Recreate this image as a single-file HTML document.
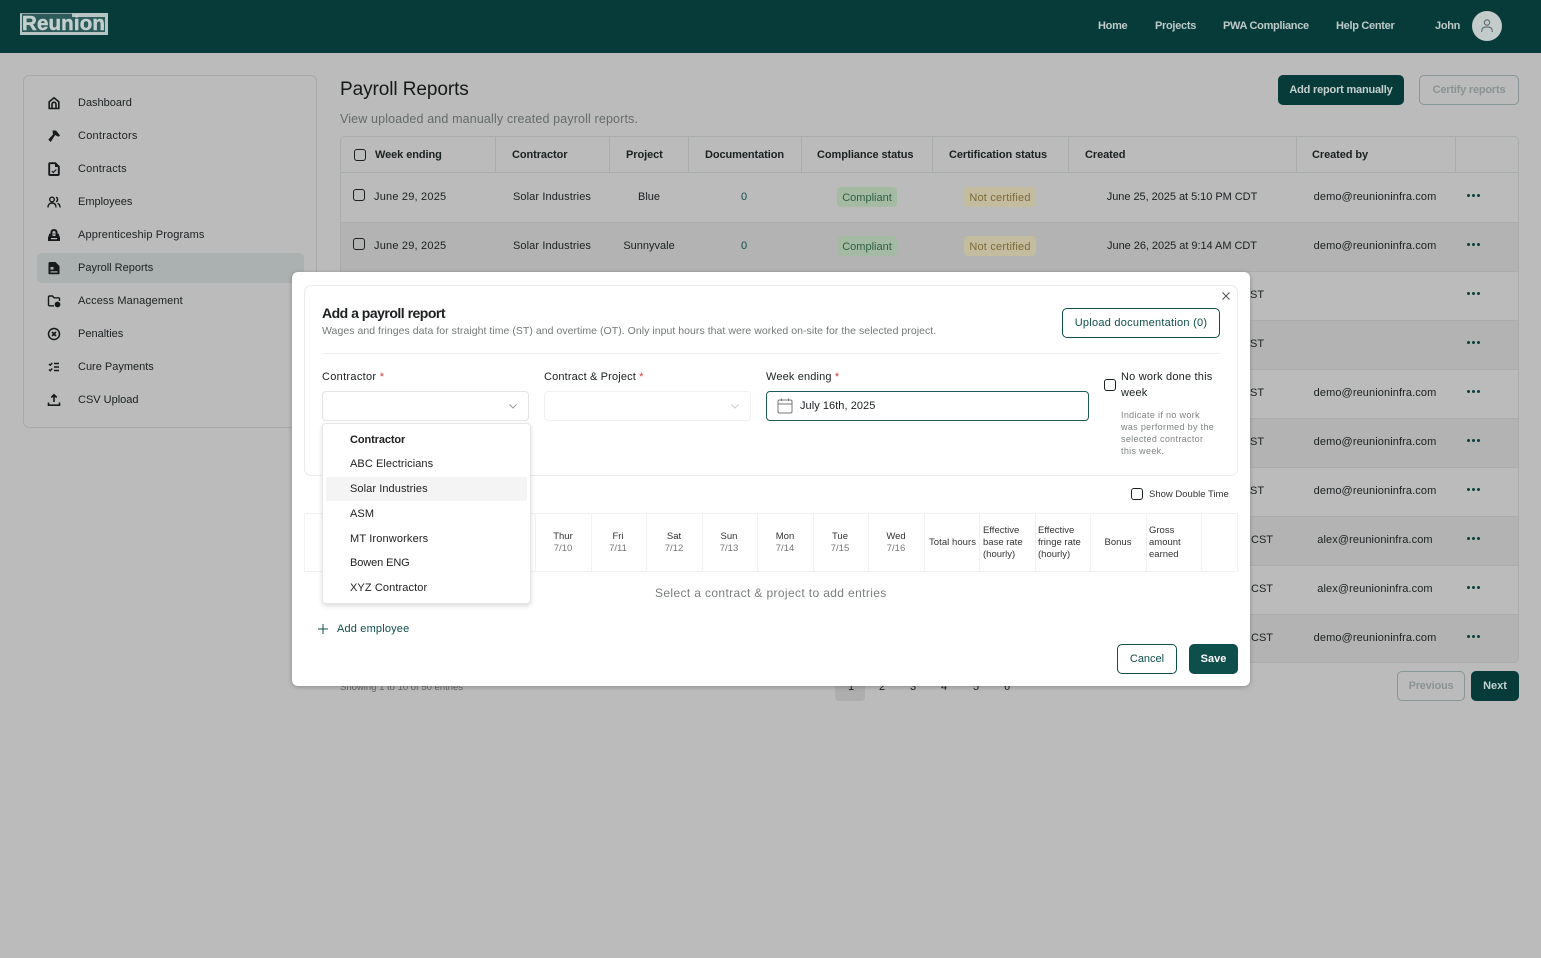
<!DOCTYPE html>
<html lang="en"><head><meta charset="utf-8"><title>Payroll Reports</title>
<style>
*{box-sizing:border-box}
html,body{margin:0;padding:0}
body{width:1541px;height:958px;background:#bbb;font-family:"Liberation Sans",sans-serif;position:relative;overflow:hidden;color:#1b2020;font-size:11px}
.a,.t{position:absolute}
.t{line-height:16px;white-space:nowrap;height:16px;margin-top:1px}
.c{text-align:center}
.b{font-weight:700}
.hb{font-weight:700;letter-spacing:-.08px}
.cb{position:absolute;width:12px;height:12px;border:1.5px solid #1a1f1f;border-radius:3px}
.row{position:absolute;left:341px;width:1177px;height:49px;border-top:1px solid #adadad}
.line{position:absolute;background:#a9adad;width:1px}
.ml{position:absolute;background:#f2f2f2;width:1px;top:513px;height:58px}
.dots{position:absolute;width:13px;height:3px;left:1467px}
.dots i{position:absolute;top:0;width:3px;height:3px;border-radius:50%;background:#0b3f3d}
.dots i:nth-child(1){left:0}.dots i:nth-child(2){left:5px}.dots i:nth-child(3){left:10px}
.side{position:absolute;left:47px;width:14px;height:14px}
.nav{color:#bccac8;font-weight:700;top:17px;letter-spacing:-.3px}
.it{left:350px;letter-spacing:.08px;color:#222;font-size:11px}
.hd{font-size:9.5px;color:#333}
.hg{font-size:9.5px;color:#777}
.help{left:1121px;font-size:9px;letter-spacing:.33px;color:#808484;margin-top:0}
.bd{letter-spacing:-.2px}
</style></head><body>

<!-- top bar -->
<div class="a" style="left:20px;top:0;width:1px;height:0"></div>
<div class="a" style="left:0;top:0;width:1541px;height:53px;background:#073b3a"></div>
<div class="a" style="left:20px;top:13px;width:88px;height:22px;background:#2c5b59"></div>
<div class="a" style="left:20px;top:32px;width:88px;height:3px;background:#b6c5c3"></div>
<div class="a" style="left:72px;top:13px;width:36px;height:4px;background:#b6c5c3"></div>
<div class="a" style="left:105px;top:13px;width:3px;height:22px;background:#b6c5c3"></div>
<div class="a" style="left:20px;top:13px;width:2px;height:22px;background:#b6c5c3"></div>
<div class="a" style="left:20px;top:13px;width:52px;height:1px;background:#8ea5a3"></div>
<div class="t" style="left:22px;top:15px;margin:0;line-height:18px;height:18px;font-size:20.500px;font-weight:700;color:#c2d0ce;letter-spacing:.15px;-webkit-text-stroke:.5px #c2d0ce">Reunion</div>
<div class="t nav" style="left:1098px">Home</div>
<div class="t nav" style="left:1155px">Projects</div>
<div class="t nav" style="left:1223px">PWA Compliance</div>
<div class="t nav" style="left:1336px">Help Center</div>
<div class="t nav" style="left:1435px">John</div>
<div class="a" style="left:1472px;top:11px;width:30px;height:30px;border-radius:50%;background:#c4cbcb"></div>
<svg class="a" style="left:1479px;top:18px" width="16" height="16" viewBox="0 0 16 16" fill="none" stroke="#5f6b6b" stroke-width="1.1"><circle cx="8" cy="4.5" r="2.7"/><path d="M2.8 14v-1.5c0-2.2 1.8-3.6 5.2-3.600s5.200 1.400 5.200 3.600V14"/></svg>

<!-- sidebar -->
<div class="a" style="left:23px;top:75px;width:294px;height:353px;border:1px solid #a9a9a9;border-radius:6px"></div>
<div class="a" style="left:37px;top:253px;width:267px;height:30px;background:#abb1b1;border-radius:5px"></div>
<div class="t" style="left:78px;top:94px">Dashboard</div>
<div class="t" style="left:78px;top:127px;letter-spacing:.25px">Contractors</div>
<div class="t" style="left:78px;top:160px;letter-spacing:.2px">Contracts</div>
<div class="t" style="left:78px;top:193px">Employees</div>
<div class="t" style="left:78px;top:226px;letter-spacing:.13px">Apprenticeship Programs</div>
<div class="t" style="left:78px;top:259px">Payroll Reports</div>
<div class="t" style="left:78px;top:292px;letter-spacing:.12px">Access Management</div>
<div class="t" style="left:78px;top:325px">Penalties</div>
<div class="t" style="left:78px;top:358px">Cure Payments</div>
<div class="t" style="left:78px;top:391px">CSV Upload</div>

<svg class="side" style="top:96px" viewBox="0 0 14 14" fill="none" stroke="#161a1a" stroke-width="1.600"><path d="M2.200 12.500V5.800L7 1.800l4.800 4v6.700z"/><path d="M5 12.500V8.200a2 2 0 0 1 4 0v4.300"/></svg>
<svg class="side" style="top:129px" viewBox="0 0 14 14" fill="#161a1a"><path d="M5.500 1.500h3.500l4 5-1.700 1.200-3-1.700-.8 1L3.700 13 1.300 10.600 6 5.500z"/></svg>
<svg class="side" style="top:162px" viewBox="0 0 14 14"><path d="M3 1.200h5.300L11.800 4.700V12a1 1 0 0 1-1 1H3.200a1 1 0 0 1-1-1V2a.800.800 0 0 1 .8-.8z" fill="none" stroke="#161a1a" stroke-width="1.900"/><path d="M8 1v4h4" fill="#161a1a"/><path d="M4.800 9l1.500 1.500 3-3" fill="none" stroke="#161a1a" stroke-width="1.200"/></svg>
<svg class="side" style="top:195px" viewBox="0 0 14 14" fill="none" stroke="#161a1a" stroke-width="1.400"><circle cx="5" cy="4.500" r="2.300"/><path d="M1 12.500c0-3 1.600-4.500 4-4.500s4 1.500 4 4.500"/><path d="M9 2.300a2.300 2.300 0 0 1 0 4.400M10.500 8.300c1.600.6 2.500 2 2.500 4.200"/></svg>
<svg class="side" style="top:228px" viewBox="0 0 14 14"><path d="M3.500 5.500V4a3.500 3 0 0 1 7 0v1.500h1L13 9.500V13H1V9.500l1.500-4z" fill="#161a1a"/><path d="M5.500 8V4.500a1.500 1.500 0 0 1 3 0V8z" fill="#bbb"/><rect x="6.300" y="5.500" width="1.400" height="1" fill="#161a1a"/><rect x="4" y="10" width="6" height="1.200" fill="#bbb"/></svg>
<svg class="side" style="top:261px" viewBox="0 0 14 14"><path d="M3 1h5.500L12.500 5v7.500a.800.800 0 0 1-.8.800H2.300a.800.800 0 0 1-.8-.8V2.500A1.500 1.500 0 0 1 3 1z" fill="#161a1a"/><rect x="3.500" y="6" width="3" height="2.600" fill="#abb1b1"/><rect x="3.500" y="10.300" width="7" height="1.200" fill="#abb1b1"/></svg>
<svg class="side" style="top:294px" viewBox="0 0 14 14" fill="none" stroke="#161a1a" stroke-width="1.400"><path d="M7 11.800H2.500a1 1 0 0 1-1-1V3a1 1 0 0 1 1-1h3l1.500 1.800h4.500a1 1 0 0 1 1 1V7"/><circle cx="10.500" cy="10.500" r="2.200" fill="#161a1a"/></svg>
<svg class="side" style="top:327px" viewBox="0 0 14 14" fill="none" stroke="#161a1a" stroke-width="1.500"><circle cx="7" cy="7" r="5.500"/><path d="M5 5l4 4M9 5l-4 4" stroke-width="1.700"/></svg>
<svg class="side" style="top:360px" viewBox="0 0 14 14" fill="none" stroke="#161a1a" stroke-width="1.400"><path d="M2 4l1.200 1.200L5.300 3M2 9.500l1.200 1.200 2.100-2.200M7 3.500h5M7 7h5M7 10.500h5"/></svg>
<svg class="side" style="top:393px" viewBox="0 0 14 14" fill="none" stroke="#161a1a" stroke-width="1.600"><path d="M7 9V2M4.300 4.500L7 1.800l2.700 2.700"/><path d="M1.500 9.500v2.700h11V9.500"/></svg>

<!-- page header -->
<div class="t" style="left:340px;top:78px;height:22px;line-height:22px;font-size:19px;letter-spacing:-.08px;color:#151919">Payroll Reports</div>
<div class="t" style="left:340px;top:110px;font-size:12.500px;letter-spacing:.14px;color:#666b6b">View uploaded and manually created payroll reports.</div>
<div class="a" style="left:1278px;top:75px;width:126px;height:30px;background:#073b3a;border-radius:5px"></div>
<div class="t c b bd" style="left:1278px;top:81px;width:126px;color:#c4d1cf">Add report manually</div>
<div class="a" style="left:1419px;top:75px;width:100px;height:30px;border:1px solid #879696;border-radius:5px"></div>
<div class="t c b bd" style="left:1419px;top:81px;width:100px;color:#8b9393">Certify reports</div>

<!-- table -->
<div class="a" style="left:340px;top:136px;width:1179px;height:527px;border:1px solid #a9adad;border-radius:5px"></div>
<div class="row" style="top:222px;background:#b3b3b3"></div>
<div class="row" style="top:271px"></div>
<div class="row" style="top:320px;background:#b3b3b3"></div>
<div class="row" style="top:369px"></div>
<div class="row" style="top:418px;background:#b3b3b3"></div>
<div class="row" style="top:467px"></div>
<div class="row" style="top:516px;background:#b3b3b3"></div>
<div class="row" style="top:565px"></div>
<div class="row" style="top:614px;background:#b3b3b3;height:48px"></div>
<div class="a" style="left:341px;top:172px;width:1177px;height:1px;background:#a9adad"></div>
<div class="line" style="left:495px;top:137px;height:35px"></div>
<div class="line" style="left:609px;top:137px;height:35px"></div>
<div class="line" style="left:688px;top:137px;height:35px"></div>
<div class="line" style="left:801px;top:137px;height:35px"></div>
<div class="line" style="left:932px;top:137px;height:35px"></div>
<div class="line" style="left:1068px;top:137px;height:35px"></div>
<div class="line" style="left:1296px;top:137px;height:35px"></div>
<div class="line" style="left:1455px;top:137px;height:35px"></div>

<div class="cb" style="left:354px;top:149px"></div>
<div class="t hb" style="left:375px;top:146px">Week ending</div>
<div class="t hb" style="left:512px;top:146px">Contractor</div>
<div class="t hb" style="left:626px;top:146px">Project</div>
<div class="t hb" style="left:705px;top:146px">Documentation</div>
<div class="t hb" style="left:817px;top:146px">Compliance status</div>
<div class="t hb" style="left:949px;top:146px">Certification status</div>
<div class="t hb" style="left:1085px;top:146px">Created</div>
<div class="t hb" style="left:1312px;top:146px">Created by</div>

<div class="cb" style="left:353px;top:189px"></div>
<div class="t" style="left:374px;top:188px;letter-spacing:.2px">June 29, 2025</div>
<div class="t c" style="left:492px;top:188px;width:120px;letter-spacing:.1px">Solar Industries</div>
<div class="t c" style="left:609px;top:188px;width:80px">Blue</div>
<div class="t c" style="left:724px;top:188px;width:40px;color:#0f4f4c">0</div>
<div class="a" style="left:837px;top:187px;width:60px;height:20px;background:#a5baa3;border-radius:4px"></div>
<div class="t c" style="left:837px;top:189px;width:60px;color:#2f5f44">Compliant</div>
<div class="a" style="left:964px;top:187px;width:72px;height:20px;background:#c4bc9f;border-radius:4px"></div>
<div class="t c" style="left:964px;top:189px;width:72px;color:#7d6a3a;letter-spacing:.2px">Not certified</div>
<div class="t c" style="left:1082px;top:188px;width:200px;letter-spacing:-.04px">June 25, 2025 at 5:10 PM CDT</div>
<div class="t c" style="left:1295px;top:188px;width:160px;letter-spacing:.1px">demo@reunioninfra.com</div>
<div class="dots" style="top:194px"><i></i><i></i><i></i></div>

<div class="cb" style="left:353px;top:238px"></div>
<div class="t" style="left:374px;top:237px;letter-spacing:.2px">June 29, 2025</div>
<div class="t c" style="left:492px;top:237px;width:120px;letter-spacing:.1px">Solar Industries</div>
<div class="t c" style="left:609px;top:237px;width:80px">Sunnyvale</div>
<div class="t c" style="left:724px;top:237px;width:40px;color:#0f4f4c">0</div>
<div class="a" style="left:837px;top:236px;width:60px;height:20px;background:#a5baa3;border-radius:4px"></div>
<div class="t c" style="left:837px;top:238px;width:60px;color:#2f5f44">Compliant</div>
<div class="a" style="left:964px;top:236px;width:72px;height:20px;background:#c4bc9f;border-radius:4px"></div>
<div class="t c" style="left:964px;top:238px;width:72px;color:#7d6a3a;letter-spacing:.2px">Not certified</div>
<div class="t c" style="left:1082px;top:237px;width:200px;letter-spacing:-.04px">June 26, 2025 at 9:14 AM CDT</div>
<div class="t c" style="left:1295px;top:237px;width:160px;letter-spacing:.1px">demo@reunioninfra.com</div>
<div class="dots" style="top:243px"><i></i><i></i><i></i></div>

<div class="t" style="left:1250px;top:286px">ST</div><div class="dots" style="top:292px"><i></i><i></i><i></i></div>
<div class="t" style="left:1250px;top:335px">ST</div><div class="dots" style="top:341px"><i></i><i></i><i></i></div>
<div class="t" style="left:1250px;top:384px">ST</div><div class="t c" style="left:1295px;top:384px;width:160px;letter-spacing:.1px">demo@reunioninfra.com</div><div class="dots" style="top:390px"><i></i><i></i><i></i></div>
<div class="t" style="left:1250px;top:433px">ST</div><div class="t c" style="left:1295px;top:433px;width:160px;letter-spacing:.1px">demo@reunioninfra.com</div><div class="dots" style="top:439px"><i></i><i></i><i></i></div>
<div class="t" style="left:1250px;top:482px">ST</div><div class="t c" style="left:1295px;top:482px;width:160px;letter-spacing:.1px">demo@reunioninfra.com</div><div class="dots" style="top:488px"><i></i><i></i><i></i></div>
<div class="t" style="left:1251px;top:531px">CST</div><div class="t c" style="left:1295px;top:531px;width:160px;letter-spacing:.1px">alex@reunioninfra.com</div><div class="dots" style="top:537px"><i></i><i></i><i></i></div>
<div class="t" style="left:1251px;top:580px">CST</div><div class="t c" style="left:1295px;top:580px;width:160px;letter-spacing:.1px">alex@reunioninfra.com</div><div class="dots" style="top:586px"><i></i><i></i><i></i></div>
<div class="t" style="left:1251px;top:629px">CST</div><div class="t c" style="left:1295px;top:629px;width:160px;letter-spacing:.1px">demo@reunioninfra.com</div><div class="dots" style="top:635px"><i></i><i></i><i></i></div>

<!-- pagination -->
<div class="t" style="left:340px;top:679px;font-size:9.500px;color:#666">Showing 1 to 10 of 50 entries</div>
<div class="a" style="left:835px;top:672px;width:30px;height:29px;background:#aeaeae;border-radius:4px"></div>
<div class="t c" style="left:841px;top:678px;width:20px">1</div>
<div class="t c" style="left:872px;top:678px;width:20px">2</div>
<div class="t c" style="left:903px;top:678px;width:20px">3</div>
<div class="t c" style="left:934px;top:678px;width:20px">4</div>
<div class="t c" style="left:966px;top:678px;width:20px">5</div>
<div class="t c" style="left:997px;top:678px;width:20px">6</div>
<div class="a" style="left:1397px;top:671px;width:68px;height:30px;border:1px solid #879696;border-radius:5px"></div>
<div class="t c b bd" style="left:1397px;top:677px;width:68px;color:#8b9393">Previous</div>
<div class="a" style="left:1471px;top:671px;width:48px;height:30px;background:#073b3a;border-radius:5px"></div>
<div class="t c b" style="left:1471px;top:677px;width:48px;color:#c4d1cf">Next</div>

<!-- modal -->
<div class="a" style="left:292px;top:272px;width:958px;height:414px;background:#fff;border-radius:6px;box-shadow:0 1px 5px rgba(0,0,0,.25)"></div>
<div class="a" style="left:304px;top:285px;width:934px;height:191px;border:1px solid #ececec;border-radius:7px"></div>
<svg class="a" style="left:1221px;top:291px" width="10" height="10" viewBox="0 0 10 10" stroke="#555" stroke-width="1.100"><path d="M1.500 1.500l7 7M8.500 1.500l-7 7"/></svg>
<div class="t b" style="left:322px;top:305px;margin:0;font-size:14px;letter-spacing:-.5px;color:#1c2020">Add a payroll report</div>
<div class="t" style="left:322px;top:322px;font-size:10.500px;letter-spacing:.04px;color:#747878">Wages and fringes data for straight time (ST) and overtime (OT). Only input hours that were worked on-site for the selected project.</div>
<div class="a" style="left:1062px;top:308px;width:158px;height:30px;border:1px solid #0f4f4c;border-radius:5px"></div>
<div class="t c" style="left:1062px;top:314px;width:158px;letter-spacing:.25px;color:#0f4f4c">Upload documentation (0)</div>
<div class="a" style="left:322px;top:353px;width:898px;height:1px;background:#f0f0f0"></div>

<div class="t" style="left:322px;top:368px;letter-spacing:.3px">Contractor <span style="color:#d03a3a">*</span></div>
<div class="t" style="left:544px;top:368px;letter-spacing:.15px">Contract &amp; Project <span style="color:#d03a3a">*</span></div>
<div class="t" style="left:766px;top:368px;letter-spacing:.15px">Week ending <span style="color:#d03a3a">*</span></div>

<div class="a" style="left:322px;top:391px;width:207px;height:30px;border:1px solid #e4e4e4;border-radius:4px"></div>
<svg class="a" style="left:509px;top:404px" width="8" height="5" viewBox="0 0 8 5" fill="none" stroke="#999" stroke-width="1"><path d="M.5.500L4 4 7.500.500"/></svg>
<div class="a" style="left:544px;top:391px;width:207px;height:30px;border:1px solid #f0f0f0;border-radius:4px"></div>
<svg class="a" style="left:731px;top:404px" width="8" height="5" viewBox="0 0 8 5" fill="none" stroke="#ccc" stroke-width="1"><path d="M.5.500L4 4 7.500.500"/></svg>
<div class="a" style="left:766px;top:391px;width:323px;height:30px;border:1px solid #1f5a56;border-radius:4px"></div>
<svg class="a" style="left:777px;top:398px" width="16" height="16" viewBox="0 0 16 16" fill="none" stroke="#777" stroke-width="1"><rect x="1" y="2" width="14" height="13" rx="1.500"/><path d="M1 6h14M4.500.500V3M11.500.500V3"/></svg>
<div class="t" style="left:800px;top:397px;letter-spacing:.05px">July 16th, 2025</div>

<div class="cb" style="left:1104px;top:379px"></div>
<div class="t" style="left:1121px;top:368px;letter-spacing:.2px">No work done this</div>
<div class="t" style="left:1121px;top:384px;letter-spacing:.2px">week</div>
<div class="t help" style="top:407px">Indicate if no work</div>
<div class="t help" style="top:419px">was performed by the</div>
<div class="t help" style="top:431px">selected contractor</div>
<div class="t help" style="top:443px">this week.</div>

<div class="cb" style="left:1131px;top:488px"></div>
<div class="t" style="left:1149px;top:486px;font-size:9.500px;color:#333">Show Double Time</div>

<!-- modal table -->
<div class="a" style="left:304px;top:513px;width:934px;height:59px;border:1px solid #f2f2f2"></div>
<div class="ml" style="left:535px"></div><div class="ml" style="left:591px"></div><div class="ml" style="left:646px"></div><div class="ml" style="left:702px"></div><div class="ml" style="left:757px"></div><div class="ml" style="left:813px"></div><div class="ml" style="left:868px"></div><div class="ml" style="left:924px"></div><div class="ml" style="left:979px"></div><div class="ml" style="left:1035px"></div><div class="ml" style="left:1090px"></div><div class="ml" style="left:1146px"></div><div class="ml" style="left:1201px"></div>

<div class="t c hd" style="left:543px;top:528px;width:40px">Thur</div><div class="t c hg" style="left:543px;top:540px;width:40px">7/10</div>
<div class="t c hd" style="left:598px;top:528px;width:40px">Fri</div><div class="t c hg" style="left:598px;top:540px;width:40px">7/11</div>
<div class="t c hd" style="left:654px;top:528px;width:40px">Sat</div><div class="t c hg" style="left:654px;top:540px;width:40px">7/12</div>
<div class="t c hd" style="left:709px;top:528px;width:40px">Sun</div><div class="t c hg" style="left:709px;top:540px;width:40px">7/13</div>
<div class="t c hd" style="left:765px;top:528px;width:40px">Mon</div><div class="t c hg" style="left:765px;top:540px;width:40px">7/14</div>
<div class="t c hd" style="left:820px;top:528px;width:40px">Tue</div><div class="t c hg" style="left:820px;top:540px;width:40px">7/15</div>
<div class="t c hd" style="left:876px;top:528px;width:40px">Wed</div><div class="t c hg" style="left:876px;top:540px;width:40px">7/16</div>
<div class="t hd" style="left:929px;top:534px;letter-spacing:.05px">Total hours</div>
<div class="t hd" style="left:983px;top:522px">Effective</div><div class="t hd" style="left:983px;top:534px">base rate</div><div class="t hd" style="left:983px;top:546px">(hourly)</div>
<div class="t hd" style="left:1038px;top:522px">Effective</div><div class="t hd" style="left:1038px;top:534px">fringe rate</div><div class="t hd" style="left:1038px;top:546px">(hourly)</div>
<div class="t c hd" style="left:1098px;top:534px;width:40px">Bonus</div>
<div class="t hd" style="left:1149px;top:522px">Gross</div><div class="t hd" style="left:1149px;top:534px">amount</div><div class="t hd" style="left:1149px;top:546px">earned</div>

<div class="t" style="left:655px;top:585px;margin:0;font-size:12px;letter-spacing:.37px;color:#7a7e7e">Select a contract &amp; project to add entries</div>

<svg class="a" style="left:318px;top:624px" width="10" height="10" viewBox="0 0 10 10" stroke="#0f4f4c" stroke-width="1"><path d="M5 0v10M0 5h10"/></svg>
<div class="t" style="left:337px;top:620px;letter-spacing:.17px;color:#0f4f4c">Add employee</div>

<div class="a" style="left:1117px;top:644px;width:60px;height:30px;border:1px solid #0f4f4c;border-radius:5px"></div>
<div class="t c" style="left:1117px;top:650px;width:60px;color:#0f4f4c">Cancel</div>
<div class="a" style="left:1189px;top:644px;width:49px;height:30px;background:#0e4f4b;border-radius:5px"></div>
<div class="t c b" style="left:1189px;top:650px;width:49px;color:#fff">Save</div>

<!-- dropdown -->
<div class="a" style="left:322px;top:423px;width:209px;height:181px;background:#fff;border:1px solid #e6e6e6;border-radius:4px;box-shadow:0 2px 5px rgba(0,0,0,.15)"></div>
<div class="a" style="left:326px;top:477px;width:201px;height:24px;background:#f4f4f4;border-radius:2px"></div>
<div class="t it b" style="top:431px;letter-spacing:-.1px">Contractor</div>
<div class="t it" style="top:455px">ABC Electricians</div>
<div class="t it" style="top:480px">Solar Industries</div>
<div class="t it" style="top:505px">ASM</div>
<div class="t it" style="top:530px;letter-spacing:.15px">MT Ironworkers</div>
<div class="t it" style="top:554px;letter-spacing:-.1px">Bowen ENG</div>
<div class="t it" style="top:579px;letter-spacing:.1px">XYZ Contractor</div>

</body></html>
